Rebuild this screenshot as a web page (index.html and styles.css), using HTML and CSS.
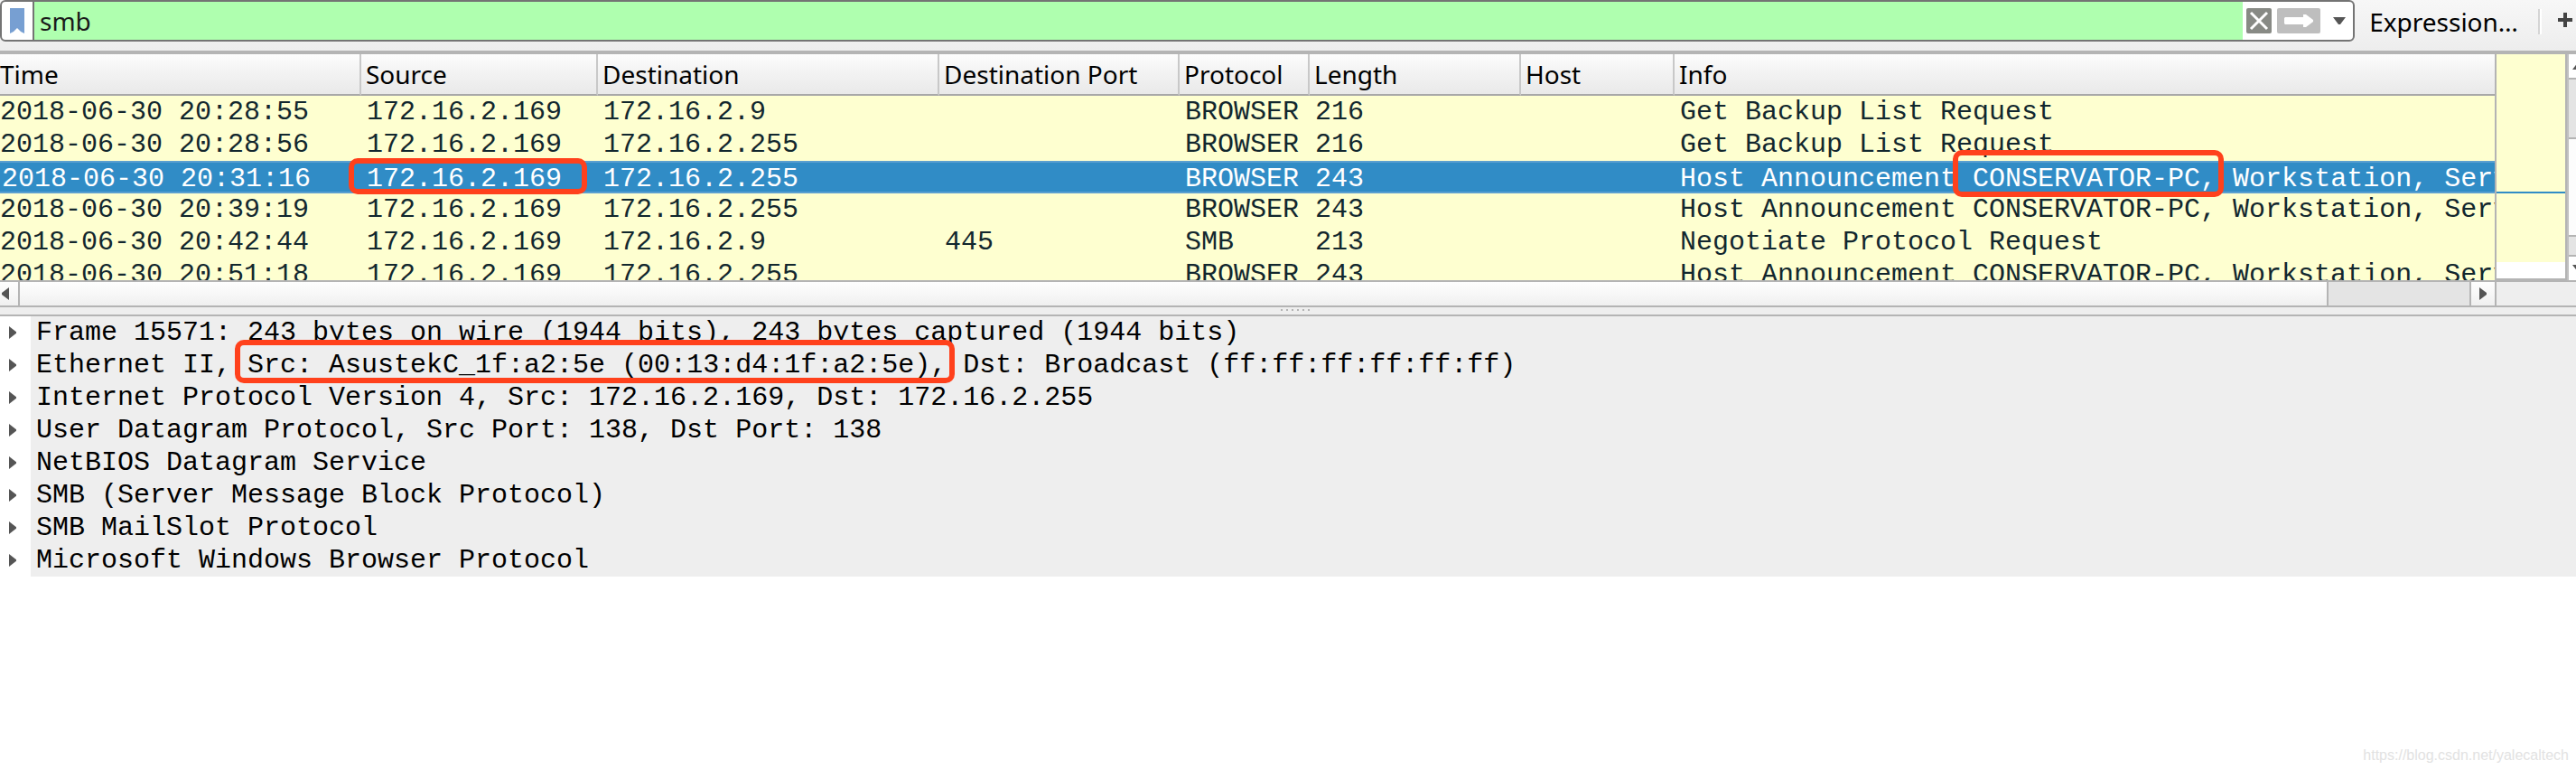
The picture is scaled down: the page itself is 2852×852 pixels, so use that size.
FILE: index.html
```html
<!DOCTYPE html>
<html lang="en">
<head>
    <meta charset="UTF-8">
    <meta name="viewport" content="width=device-width, initial-scale=1.0">
    <title>smb - Packet Capture</title>
    <link rel="stylesheet" href="styles.css">
</head>
<body>
    <form class="toolbar">
        <div class="filter">
            <button type="button" class="bookmark" aria-label="Bookmark this filter">
                <svg width="16" height="28" viewBox="0 0 16 28"><path d="M0 0h16v28l-4-2-4-4-4 4-4 2z" fill="#779fd2"/></svg>
            </button>
            <input type="text" class="filter-input" value="smb" aria-label="Display filter">
            <div class="filter-actions">
                <button type="button" aria-label="Clear filter">
                    <svg width="28" height="28" viewBox="0 0 28 28"><rect width="28" height="28" rx="2" fill="#888a85"/><path d="M5 5l18 18M23 5L5 23" stroke="#fff" stroke-width="3"/></svg>
                </button>
                <button type="submit" aria-label="Apply filter">
                    <svg width="48" height="28" viewBox="0 0 48 28"><rect width="48" height="28" rx="2" fill="#bebebe"/><path d="M9 10h20V7h3l8 6v2l-8 6h-3v-3H9l-1-1v-6z" fill="#fff"/></svg>
                </button>
                <button type="button" class="history" aria-label="Recent filters">
                    <svg width="14" height="8" viewBox="0 0 14 8"><path d="M0 0h14L8 8H6z" fill="#555"/></svg>
                </button>
            </div>
        </div>
        <button type="button" class="expression">Expression…</button>
        <span class="divider"></span>
        <button type="button" class="add" aria-label="Add filter button">
            <svg width="16" height="16" viewBox="0 0 16 16"><path d="M8 0v16M0 8h16" stroke="#444" stroke-width="4"/></svg>
        </button>
    </form>

    <main>
        <section class="packets">
            <div class="packet-list">
                <table>
                    <colgroup>
                        <col class="col-time">
                        <col class="col-source">
                        <col class="col-destination">
                        <col class="col-port">
                        <col class="col-protocol">
                        <col class="col-length">
                        <col class="col-host">
                        <col>
                    </colgroup>
                    <thead>
                        <tr><th>Time</th><th>Source</th><th>Destination</th><th>Destination Port</th><th>Protocol</th><th>Length</th><th>Host</th><th>Info</th></tr>
                    </thead>
                    <tbody>
                        <tr><td>2018-06-30 20:28:55</td><td>172.16.2.169</td><td>172.16.2.9</td><td></td><td>BROWSER</td><td>216</td><td></td><td>Get Backup List Request</td></tr>
                        <tr><td>2018-06-30 20:28:56</td><td>172.16.2.169</td><td>172.16.2.255</td><td></td><td>BROWSER</td><td>216</td><td></td><td>Get Backup List Request</td></tr>
                        <tr class="selected"><td>2018-06-30 20:31:16</td><td><span class="mark mark-ip">172.16.2.169</span></td><td>172.16.2.255</td><td></td><td>BROWSER</td><td>243</td><td></td><td>Host Announcement <span class="mark mark-host">CONSERVATOR-PC,</span> Workstation, Server</td></tr>
                        <tr><td>2018-06-30 20:39:19</td><td>172.16.2.169</td><td>172.16.2.255</td><td></td><td>BROWSER</td><td>243</td><td></td><td>Host Announcement CONSERVATOR-PC, Workstation, Server</td></tr>
                        <tr><td>2018-06-30 20:42:44</td><td>172.16.2.169</td><td>172.16.2.9</td><td>445</td><td>SMB</td><td>213</td><td></td><td>Negotiate Protocol Request</td></tr>
                        <tr><td>2018-06-30 20:51:18</td><td>172.16.2.169</td><td>172.16.2.255</td><td></td><td>BROWSER</td><td>243</td><td></td><td>Host Announcement CONSERVATOR-PC, Workstation, Server</td></tr>
                    </tbody>
                </table>
            </div>
            <div class="minimap"><div class="minimap-rows"></div></div>
            <div class="vscroll">
                <button type="button" aria-label="Scroll up"><svg width="14" height="8" viewBox="0 0 14 8"><path d="M0 8h14L8 0H6z" fill="#555"/></svg></button>
                <div class="vtrack"><div class="vthumb"></div></div>
                <button type="button" aria-label="Scroll down"><svg width="14" height="8" viewBox="0 0 14 8"><path d="M0 0h14L8 8H6z" fill="#555"/></svg></button>
            </div>
        </section>

        <div class="hscroll">
            <button type="button" class="left" aria-label="Scroll left"><svg width="8" height="14" viewBox="0 0 8 14"><path d="M8 0v14L0 8V6z" fill="#555"/></svg></button>
            <div class="htrack"><div class="hthumb"></div></div>
            <button type="button" class="right" aria-label="Scroll right"><svg width="8" height="14" viewBox="0 0 8 14"><path d="M0 0v14l8-6V6z" fill="#555"/></svg></button>
            <div class="corner"></div>
        </div>

        <div class="splitter"><i></i><i></i><i></i><i></i><i></i><i></i></div>

        <ul class="details">
            <li><button type="button" aria-label="Expand"></button><span>Frame 15571: 243 bytes on wire (1944 bits), 243 bytes captured (1944 bits)</span></li>
            <li><button type="button" aria-label="Expand"></button><span>Ethernet II, <span class="mark mark-mac">Src: AsustekC_1f:a2:5e (00:13:d4:1f:a2:5e),</span> Dst: Broadcast (ff:ff:ff:ff:ff:ff)</span></li>
            <li><button type="button" aria-label="Expand"></button><span>Internet Protocol Version 4, Src: 172.16.2.169, Dst: 172.16.2.255</span></li>
            <li><button type="button" aria-label="Expand"></button><span>User Datagram Protocol, Src Port: 138, Dst Port: 138</span></li>
            <li><button type="button" aria-label="Expand"></button><span>NetBIOS Datagram Service</span></li>
            <li><button type="button" aria-label="Expand"></button><span>SMB (Server Message Block Protocol)</span></li>
            <li><button type="button" aria-label="Expand"></button><span>SMB MailSlot Protocol</span></li>
            <li><button type="button" aria-label="Expand"></button><span>Microsoft Windows Browser Protocol</span></li>
        </ul>
    </main>

    <footer>https://blog.csdn.net/yalecaltech</footer>
</body>
</html>
```
FILE: styles.css
```css
* {
    box-sizing: border-box;
}
body {
    margin: 0;
    min-height: 100vh;
    display: flex;
    flex-direction: column;
    overflow-x: hidden;
    background: #fff;
    color: #000;
    font-family: "Noto Sans", "Open Sans", sans-serif;
    font-size: 28px;
}
button {
    display: flex;
    align-items: center;
    justify-content: center;
    flex-shrink: 0;
    padding: 0;
    border: none;
    background: none;
    color: inherit;
    font: inherit;
}
svg {
    display: block;
    flex-shrink: 0;
}

/* filter toolbar */
.toolbar {
    display: flex;
    align-items: flex-start;
    height: 60px;
    padding-right: 4px;
    border-bottom: 4px solid #b4b4b4;
    background: linear-gradient(#f7f7f7, #ededed);
}
.filter {
    flex: 1;
    display: flex;
    height: 46px;
    border: 2px solid #747474;
    border-radius: 6px;
    background: #fff;
    overflow: hidden;
}
.bookmark {
    width: 36px;
    border-right: 2px solid #747474;
}
.filter-input {
    flex: 1;
    min-width: 0;
    padding: 0 6px;
    border: none;
    outline: none;
    background: #afffaf;
    color: #1a1a1a;
    font: inherit;
}
.filter-actions {
    display: flex;
    align-items: center;
    gap: 6px;
    padding-left: 4px;
}
.history {
    width: 30px;
}
.expression {
    height: 44px;
    margin: 2px 22px 0 16px;
    line-height: 44px;
}
.divider {
    width: 4px;
    height: 28px;
    margin: 10px 18px 0 0;
    border-left: 2px solid #d4d4d4;
    background: #fff;
}
.add {
    height: 44px;
}

/* packet list */
.packets {
    display: flex;
    height: 250px;
}
.packet-list {
    flex: 1;
    min-width: 0;
    overflow: hidden;
    background: #feffd0;
}
table {
    width: 100%;
    table-layout: fixed;
    border-collapse: separate;
    border-spacing: 0;
}
.col-time { width: 400px; }
.col-source { width: 262px; }
.col-destination { width: 378px; }
.col-port { width: 266px; }
.col-protocol { width: 144px; }
.col-length { width: 234px; }
.col-host { width: 170px; }
th {
    height: 46px;
    padding: 0 0 0 5px;
    border-right: 2px solid #c8c8c8;
    border-bottom: 2px solid #a8a8a8;
    background: linear-gradient(#fdfdfd, #f2f2f2 50%, #e9e9e9);
    font-weight: normal;
    line-height: 44px;
    text-align: left;
    white-space: nowrap;
}
th:last-child {
    border-right: none;
}
td {
    height: 36px;
    padding: 0 0 0 6px;
    color: #12272e;
    font-family: "Liberation Mono", monospace;
    font-size: 30px;
    line-height: 36px;
    white-space: nowrap;
}
th:first-child,
td:first-child {
    padding-left: 0;
}
.selected td {
    padding-top: 4px;
    border-top: 2px solid #5a9fd0;
    border-bottom: 2px solid #5a9fd0;
    background: #308cc6;
    color: #fff;
    line-height: 28px;
}
.selected td:first-child {
    padding-left: 2px;
}

/* overview strip and scrollbars */
.minimap {
    width: 80px;
    border: solid #b4b4b4;
    border-width: 0 2px 2px;
    background: #fff;
}
.minimap-rows {
    height: 230px;
    background: linear-gradient(#feffd0 152px, #308cc6 152px, #308cc6 154px, #feffd0 154px);
}
.vscroll {
    display: flex;
    flex-direction: column;
    width: 10px;
    overflow: hidden;
    border-left: 2px solid #c0c0c0;
    background: #fff;
}
.vscroll button {
    height: 26px;
    justify-content: flex-start;
    padding-left: 4px;
}
.vtrack {
    flex: 1;
    padding: 64px 0 20px;
    border: solid #b4b4b4;
    border-width: 2px 0;
    background: #e4e4e4;
}
.vthumb {
    height: 100%;
    border: solid #b4b4b4;
    border-width: 2px 0;
    background: #fcfcfc;
}
.hscroll {
    display: flex;
    height: 30px;
    border: solid #b4b4b4;
    border-width: 2px 0;
    background: linear-gradient(#fefefe, #f0f0f0);
}
.hscroll .left {
    width: 22px;
    justify-content: flex-start;
    padding-left: 2px;
    border-right: 2px solid #b4b4b4;
}
.htrack {
    flex: 1;
    padding-right: 156px;
    background: #e4e4e4;
}
.hthumb {
    height: 100%;
    border-right: 2px solid #b4b4b4;
    background: linear-gradient(#fefefe, #f0f0f0);
}
.hscroll .right {
    width: 28px;
    border-left: 2px solid #b4b4b4;
}
.corner {
    width: 90px;
    border-left: 2px solid #b4b4b4;
    background: #eee;
}
.splitter {
    display: flex;
    justify-content: center;
    gap: 4px;
    height: 10px;
    padding: 2px 0 0 16px;
    border-bottom: 2px solid #b4b4b4;
    background: #eee;
}
.splitter i {
    width: 2px;
    height: 2px;
    background: #b4b4b4;
}

/* packet details */
.details {
    margin: 0;
    padding: 0;
    list-style: none;
    font-family: "Liberation Mono", monospace;
    font-size: 30px;
    line-height: 36px;
    white-space: nowrap;
}
.details li {
    display: flex;
    height: 36px;
}
.details li > button {
    width: 34px;
    justify-content: flex-start;
    padding-left: 10px;
}
.details li > button::before {
    content: "";
    width: 8px;
    height: 14px;
    background: #555;
    clip-path: polygon(0 0, 100% 45%, 100% 55%, 0 100%);
}
.details li > span {
    flex: 1;
    padding-left: 6px;
    background: #eee;
}

/* red outlines round the interesting values */
.mark {
    position: relative;
}
.mark::after {
    content: "";
    position: absolute;
    z-index: 1;
    border: 6px solid #ff411c;
    border-radius: 10px;
}
.mark-ip::after {
    inset: -6px -28px 0 -20px;
}
.mark-host::after {
    inset: -15px -8px -3px -22px;
}
.mark-mac::after {
    inset: -11px -9px -3px -14px;
}

footer {
    margin-top: auto;
    padding: 0 8px 6px 0;
    color: #e2e2e2;
    font-family: "Liberation Sans", sans-serif;
    font-size: 16px;
    line-height: 20px;
    text-align: right;
}
```
